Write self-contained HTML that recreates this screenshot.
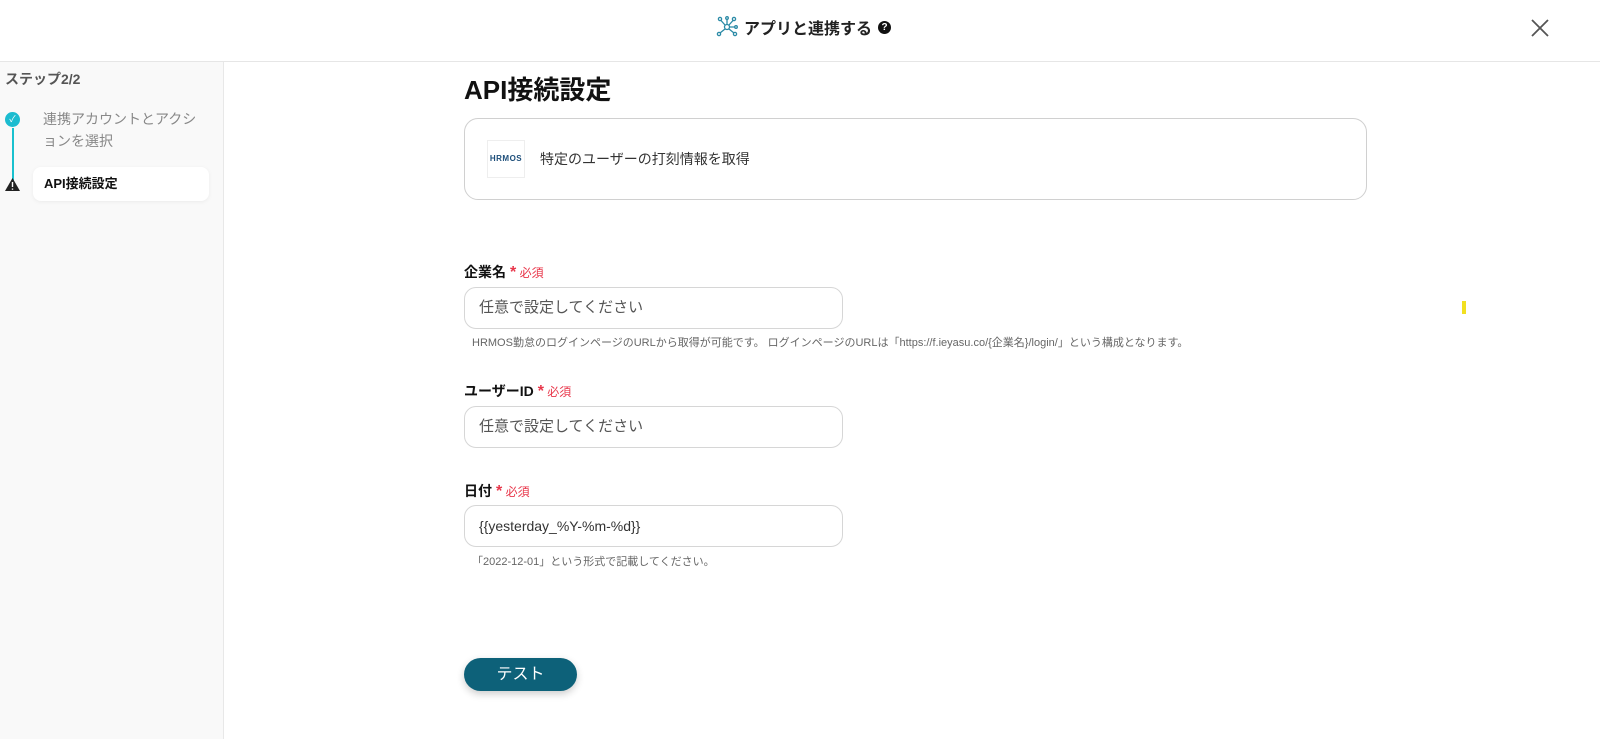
<!DOCTYPE html>
<html><head><meta charset="utf-8"><style>
*{box-sizing:border-box;margin:0;padding:0}
body{width:1600px;height:739px;overflow:hidden;background:#fff;font-family:"Liberation Sans","Noto Sans CJK JP",sans-serif;color:#222;position:relative}
.hdr{position:absolute;left:0;top:0;width:1600px;height:62px;border-bottom:1px solid #e6e6e6;background:#fff}
.title{position:absolute;left:716px;top:15px;font-size:16px;font-weight:bold;display:flex;align-items:center;gap:6px}
.side{position:absolute;left:0;top:62px;width:224px;height:677px;background:#f9f9f9;border-right:1px solid #e8e8e8}
.abs{position:absolute}
.inp{position:absolute;left:464px;width:379px;height:42px;border:1px solid #d6d6d6;border-radius:12px;padding:0 14px;line-height:40px;font-size:15px;color:#555}
.lbl{position:absolute;left:464px;font-size:14px;font-weight:bold;color:#111}
.req{color:#e8364a;font-weight:normal;font-size:12px;margin-left:4px}
.req b{font-size:16px}
.help{position:absolute;font-size:11px;color:#666}
</style></head><body>
<div class="hdr">
<div class="title">
<svg width="22" height="22" viewBox="0 0 22 22" fill="none" stroke="#2a8aa6" stroke-width="1.3"><circle cx="11" cy="11" r="2.5"/><circle cx="4" cy="3" r="1.6"/><circle cx="18" cy="3" r="1.6"/><circle cx="3" cy="18" r="1.6"/><circle cx="19" cy="18" r="1.6"/><circle cx="11" cy="2" r="1.3"/><circle cx="20" cy="11" r="1.3"/><path d="M5 4.5L9 9M17 4.5L13 9M4.3 16.7L9 13M17.7 16.7L13 13M11 3.3V8.5M18.7 11H13.5"/></svg>
<span>アプリと連携する</span>
<span style="display:inline-block;width:13px;height:13px;border-radius:50%;background:#111;color:#fff;font-size:10px;line-height:13px;text-align:center">?</span>
</div>
<svg class="abs" style="left:1530px;top:18px" width="20" height="20" viewBox="0 0 20 20" stroke="#555" stroke-width="1.8"><path d="M2 2L18 18M18 2L2 18"/></svg>
</div>
<div class="side">
<div class="abs" style="left:5px;top:7px;font-size:14px;font-weight:bold;color:#555">ステップ2/2</div>
<div class="abs" style="left:12px;top:66px;width:2px;height:55px;background:#19c1cf"></div>
<div class="abs" style="left:5px;top:50px;width:15px;height:15px;border-radius:50%;background:#1cbcd0;color:#fff;font-size:9px;text-align:center;line-height:15px">✓</div>
<div class="abs" style="left:43px;top:46px;font-size:14px;color:#888;line-height:22px;width:160px">連携アカウントとアクションを選択</div>
<svg class="abs" style="left:5px;top:116px" width="15" height="13" viewBox="0 0 15 13"><path d="M7.5 0L15 13H0Z" fill="#222"/><path d="M7.5 4V9M7.5 10.5V11.8" stroke="#fff" stroke-width="1.4"/></svg>
<div class="abs" style="left:33px;top:105px;width:176px;height:34px;background:#fff;border-radius:8px;box-shadow:0 1px 4px rgba(0,0,0,.06);font-size:13px;font-weight:bold;line-height:34px;padding-left:11px;color:#111">API接続設定</div>
</div>
<div class="abs" style="left:464px;top:70px;font-size:26px;font-weight:bold;color:#111">API接続設定</div>
<div class="abs" style="left:464px;top:118px;width:903px;height:82px;border:1px solid #d0d0d0;border-radius:14px"></div>
<div class="abs" style="left:487px;top:140px;width:38px;height:38px;border:1px solid #eee;font-size:8px;font-weight:bold;color:#1d4e7a;text-align:center;line-height:36px;letter-spacing:.5px">HRMOS</div>
<div class="abs" style="left:540px;top:149px;font-size:14px;color:#333">特定のユーザーの打刻情報を取得</div>
<div class="lbl" style="top:262px">企業名<span class="req"><b>*</b> 必須</span></div>
<div class="inp" style="top:287px">任意で設定してください</div>
<div class="help" style="left:472px;top:334px">HRMOS勤怠のログインページのURLから取得が可能です。 ログインページのURLは「https://f.ieyasu.co/{企業名}/login/」という構成となります。</div>
<div class="lbl" style="top:381px">ユーザーID<span class="req"><b>*</b> 必須</span></div>
<div class="inp" style="top:406px">任意で設定してください</div>
<div class="lbl" style="top:481px">日付<span class="req"><b>*</b> 必須</span></div>
<div class="inp" style="top:505px;font-size:14px;color:#333">{{yesterday_%Y-%m-%d}}</div>
<div class="help" style="left:472px;top:553px">「2022-12-01」という形式で記載してください。</div>
<div class="abs" style="left:1462px;top:301px;width:4px;height:13px;background:#f2e020"></div>
<div class="abs" style="left:464px;top:658px;width:113px;height:33px;border-radius:17px;background:#0d6179;color:#fff;font-size:16px;text-align:center;line-height:33px;box-shadow:0 3px 8px rgba(0,0,0,.2)">テスト</div>
</body></html>
